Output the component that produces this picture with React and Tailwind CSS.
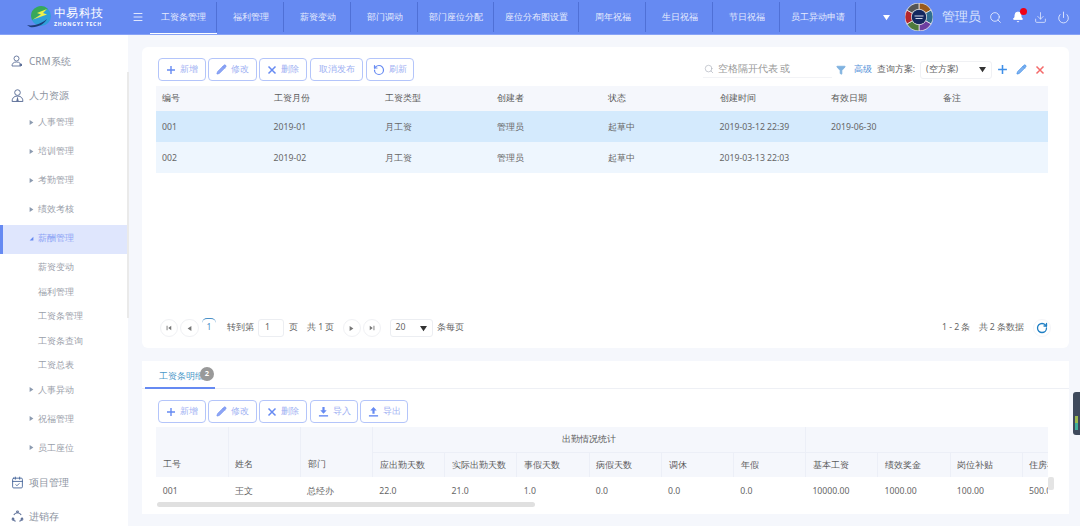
import { Menu, Search, Bell, Download, Power, Pencil, RotateCcw, RotateCw, CalendarCheck, Filter } from "lucide-react";

const tabs = [
  { label: "工资条管理", w: "w-[67px]", active: true },
  { label: "福利管理", w: "w-[67px]" },
  { label: "薪资变动", w: "w-[67px]" },
  { label: "部门调动", w: "w-[67px]" },
  { label: "部门座位分配", w: "w-[76px]" },
  { label: "座位分布图设置", w: "w-[85px]" },
  { label: "周年祝福", w: "w-[67px]" },
  { label: "生日祝福", w: "w-[67px]" },
  { label: "节日祝福", w: "w-[67px]" },
  { label: "员工异动申请", w: "w-[76px]" },
];

const rows = [
  ["001", "2019-01", "月工资", "管理员", "起草中", "2019-03-12 22:39", "2019-06-30", ""],
  ["002", "2019-02", "月工资", "管理员", "起草中", "2019-03-13 22:03", "", ""],
];

const detail = ["001", "王文", "总经办", "22.0", "21.0", "1.0", "0.0", "0.0", "0.0", "10000.00", "1000.00", "100.00", "500.00"];

function Tri({ dir = "right", className = "" }) {
  const pts = { right: "1,0 7,4 1,8", left: "7,0 1,4 7,8", down: "0,1 8,1 4,7", corner: "7,1 7,7 1,7" };
  return (
    <svg viewBox="0 0 8 8" className={className} fill="currentColor">
      <polygon points={pts[dir]} />
    </svg>
  );
}

function Edge({ last }) {
  return (
    <svg viewBox="0 0 8 8" className="w-[6px] h-[6px]" fill="currentColor">
      {last ? <path d="M1 1l4 3-4 3zM6 1h1.2v6H6z" /> : <path d="M7 1L3 4l4 3zM2 1H0.8v6H2z" />}
    </svg>
  );
}

function Logo() {
  return (
    <svg viewBox="0 0 28 24" className="w-[28px] h-[24px] shrink-0">
      <circle cx="15" cy="11" r="10" fill="#2f9fd8" />
      <path d="M5 11a10 10 0 0 1 17-7l-6 3-5 5-5 3z" fill="#38a85a" />
      <path d="M21 4l-10 4 4 1.5-8 5 14-5-4-1.5z" fill="#eef04a" />
      <path d="M1 20c6 1.5 14-1 20-6-3 5.500-10 9-17 8z" fill="#1d3c78" />
    </svg>
  );
}

function Avatar() {
  const colors = ["#9a5a1c", "#2f6d8f", "#6d3fa0", "#4f7a3c", "#b3262e", "#555555"];
  return (
    <svg viewBox="0 0 28 28" className="w-[28px] h-[28px] shrink-0 mt-[3px]">
      {colors.map((c, i) => (
        <path key={i} d="M14 14V0a14 14 0 0 1 12.1 7z" fill={c} transform={`rotate(${i * 60} 14 14)`} stroke="#eeeeee" strokeWidth="0.7" />
      ))}
      <circle cx="14" cy="14" r="8" fill="#e8e8e8" />
      <circle cx="14" cy="14" r="7.300" fill="#14275e" />
      <rect x="9.500" y="12.500" width="9" height="1" fill="#cfd6ea" />
      <rect x="10.500" y="15" width="7" height="1" fill="#cfd6ea" />
    </svg>
  );
}

function CrmIcon() {
  return (
    <svg viewBox="0 0 12 12" className="w-[12px] h-[12px]" fill="none" stroke="currentColor" strokeWidth="0.9">
      <circle cx="5.500" cy="3.500" r="2.500" />
      <path d="M1 11c0-2.500 1.500-4 4.500-4s4.500 1.500 4.500 4z" />
      <rect x="8.500" y="8.800" width="2.500" height="2.200" fill="currentColor" stroke="none" />
    </svg>
  );
}

function HrIcon() {
  return (
    <svg viewBox="0 0 12 12" className="w-[13px] h-[13px]" fill="none" stroke="currentColor" strokeWidth="0.9">
      <circle cx="6" cy="3.300" r="2.600" />
      <path d="M1 11.500c0-3 1.500-5 5-5s5 2 5 5z" />
      <path d="M6 6.800L4.800 11.500h2.400z" fill="currentColor" stroke="none" />
    </svg>
  );
}

function StockIcon() {
  return (
    <svg viewBox="0 0 14 14" className="w-[13px] h-[13px]" fill="none" stroke="currentColor" strokeWidth="1.1">
      <path d="M3 5.500a4.500 4.500 0 0 1 8 0M12 8a4.500 4.500 0 0 1-3 4.200M5 12.200A4.500 4.500 0 0 1 2 8" />
      <circle cx="7" cy="2" r="1" />
      <circle cx="2.200" cy="10" r="1" />
      <circle cx="11.800" cy="10" r="1" />
    </svg>
  );
}

function PlusIcon({ className }) {
  return (
    <svg viewBox="0 0 10 10" className={className} fill="currentColor">
      <path d="M4.300 1h1.400v3.300H9v1.400H5.700V9H4.300V5.700H1V4.300h3.300z" />
    </svg>
  );
}

function CrossIcon({ className }) {
  return (
    <svg viewBox="0 0 10 10" className={className} fill="none" stroke="currentColor" strokeWidth="1.500">
      <path d="M1.500 1.500l7 7M8.500 1.500l-7 7" />
    </svg>
  );
}

// 导入 / 导出: arrow over a solid bar
function TrayIcon({ up }) {
  return (
    <svg viewBox="0 0 12 12" className="w-[11px] h-[11px] text-[#668af2]" fill="currentColor">
      <rect x="1" y="10" width="10" height="1.500" />
      {up ? <path d="M6 1l3.500 4H7.200v3.500H4.800V5H2.500z" /> : <path d="M6 8.500L2.500 4.500h2.300V1h2.400v3.500h2.300z" />}
    </svg>
  );
}

function SideTop({ icon, label }) {
  return (
    <div className="h-[34px] flex items-center pl-[10px] gap-[5px] text-[10px] text-[#8d949f]">
      <span className="w-[14px] flex justify-center text-[#5f7199]">{icon}</span>
      {label}
    </div>
  );
}

function SideSub({ label, active, open }) {
  return (
    <div className={`h-[29px] flex items-center pb-[3px] text-[9px] ${active ? "bg-[#dfe6fd] border-l-[3px] border-[#668af2] pl-[26px] text-[#8ea5f5]" : "pl-[29px] text-[#9aa0aa]"}`}>
      <Tri dir={open ? "corner" : "right"} className={`w-[5px] h-[5px] mr-[4px] ${active ? "text-[#668af2]" : "text-[#8c9bb0]"}`} />
      {label}
    </div>
  );
}

function Btn({ icon, label, w }) {
  return (
    <button className={`${w} h-[23px] flex items-center justify-center gap-[4px] rounded-[4px] border border-[#b4c5fa] bg-white text-[8.5px] text-[#9fb2f3]`}>
      {icon}
      {label}
    </button>
  );
}

function Circle({ children, w = "w-[18px]" }) {
  return (
    <span className={`${w} h-[18px] rounded-full border border-[#f0f1f4] flex items-center justify-center text-[#777]`}>
      {children}
    </span>
  );
}

function ThGroup({ children }) {
  return (
    <th rowSpan={2} className="border-r border-[#eceff7] align-bottom font-medium text-left pl-[6.7px] pb-[6px]">
      {children}
    </th>
  );
}

const plusIcon = <PlusIcon className="w-[10px] h-[10px] text-[#668af2]" />;
const penIcon = <Pencil className="w-[11px] h-[11px] text-[#6f90f0]" fill="#8ea5f5" strokeWidth={1.5} />;
const xIcon = <CrossIcon className="w-[10px] h-[10px] text-[#668af2]" />;

export default function App() {
  return (
    <div className="w-[1080px] h-[526px] overflow-hidden flex flex-col bg-[#f5f7fc] font-['Noto_Sans','Noto_Sans_CJK_SC',sans-serif]">
      {/* Header */}
      <header className="h-[35px] shrink-0 flex bg-[#668af2] border-b border-[#88a3f6] text-[#e6ecfd]">
        <div className="w-[128px] flex items-center pl-[26px]">
          <Logo />
          <div className="leading-none">
            <div className="text-[11.5px] font-medium tracking-[0.3px] text-white">中易科技</div>
            <div className="text-[5.2px] mt-[3px] tracking-[0.75px] font-bold text-white whitespace-nowrap">ZHONGYI TECH</div>
          </div>
        </div>
        <div className="w-[22px] flex items-center pl-[3.5px]">
          <Menu className="w-[12px] h-[12px] text-white" strokeWidth={1.6} />
        </div>
        <div className="flex">
          {tabs.map((t) => (
            <div key={t.label} className={`${t.w} relative flex items-center justify-center text-[8.5px] pt-[1px]`}>
              {t.label}
              <span className="absolute right-0 top-[2px] bottom-[2px] w-px bg-[#4f70d6]" />
              {t.active && <span className="absolute left-0 right-0 bottom-0 h-px bg-white" />}
            </div>
          ))}
        </div>
        <div className="w-[49px] flex items-center justify-center pl-[11px]">
          <Tri dir="down" className="w-[7px] h-[7px] text-white" />
        </div>
        <Avatar />
        <span className="ml-[9px] text-[12.5px] flex items-center text-[#dbe4fc]">管理员</span>
        <div className="ml-[8px] flex items-center gap-[10px]">
          <Search className="w-[13px] h-[13px]" strokeWidth={1.6} />
          <span className="relative">
            <Bell className="w-[12px] h-[12px] text-white" fill="white" strokeWidth={1.6} />
            <span className="absolute -top-[3px] -right-[3px] w-[7px] h-[7px] rounded-full bg-[#f00014]" />
          </span>
          <Download className="w-[13px] h-[13px]" strokeWidth={1.4} />
          <Power className="w-[13px] h-[13px]" strokeWidth={1.6} />
        </div>
      </header>

      <div className="flex flex-1 min-h-0">
        {/* Sidebar */}
        <aside className="w-[128px] shrink-0 bg-white relative pt-[9px]">
          <SideTop icon={<CrmIcon />} label="CRM系统" />
          <SideTop icon={<HrIcon />} label="人力资源" />
          <div className="mt-[-3px]">
            <SideSub label="人事管理" />
            <SideSub label="培训管理" />
            <SideSub label="考勤管理" />
            <SideSub label="绩效考核" />
            <SideSub label="薪酬管理" active open />
          </div>
          {["薪资变动", "福利管理", "工资条管理", "工资条查询", "工资总表"].map((s) => (
            <div key={s} className="h-[24.5px] flex items-center pt-[2px] pl-[38px] text-[9.2px] text-[#9aa0aa]">{s}</div>
          ))}
          <SideSub label="人事异动" />
          <SideSub label="祝福管理" />
          <SideSub label="员工座位" />
          <div className="mt-[2px]">
            <SideTop icon={<CalendarCheck className="w-[13px] h-[13px] text-[#3f5f95]" strokeWidth={1.6} />} label="项目管理" />
            <SideTop icon={<StockIcon />} label="进销存" />
          </div>
          <span className="absolute -right-[1px] top-[37px] w-[2px] h-[246px] bg-[#eaeaea]" />
        </aside>

        {/* Main */}
        <main className="flex-1 min-w-0 pl-[14px] pr-[11px] pt-[12px]">
          {/* Top card */}
          <section className="h-[301px] bg-white rounded-[6px] flex flex-col pl-[14px] pr-[21px]">
            <div className="h-[39px] flex items-start pt-[11px] pl-[2px]">
              <div className="flex gap-[2px]">
                <Btn icon={plusIcon} label="新增" w="w-[48px]" />
                <Btn icon={penIcon} label="修改" w="w-[49px]" />
                <Btn icon={xIcon} label="删除" w="w-[48px]" />
                <Btn label="取消发布" w="w-[53px] ml-[1px]" />
                <Btn icon={<RotateCcw className="w-[12px] h-[12px] text-[#668af2]" strokeWidth={2.4} />} label="刷新" w="w-[48px] ml-[1px]" />
              </div>
              <div className="ml-auto flex items-center h-[23px] mr-[3px]">
                <div className="w-[129px] h-[16px] border-b border-[#f2f3f6] flex items-center pl-[1px] gap-[4px] text-[9.7px] text-[#999] mr-[4px]">
                  <Search className="w-[10px] h-[10px] text-[#a8adb8]" strokeWidth={1.5} />
                  空格隔开代表 或
                </div>
                <Filter className="w-[10px] h-[10px] text-[#7fb2e0] mr-[8px]" fill="#7fb2e0" />
                <span className="text-[8.5px] text-[#4f8fd8] mr-[5px]">高级</span>
                <span className="text-[8.5px] text-[#666] mr-[5px]">查询方案:</span>
                <div className="w-[72px] h-[18px] rounded-[3px] border border-[#f0f1f4] flex items-center justify-between pl-[5px] pr-[5px] text-[8.5px] text-[#666]">
                  (空方案)
                  <Tri dir="down" className="w-[7px] h-[7px] text-[#333]" />
                </div>
                <PlusIcon className="w-[11px] h-[11px] text-[#3f8fe8] ml-[5px]" />
                <Pencil className="w-[11px] h-[11px] text-[#3f8fe8] ml-[8px]" fill="#7fb2f0" strokeWidth={1.5} />
                <CrossIcon className="w-[10px] h-[10px] text-[#f46a6a] ml-[8px]" />
              </div>
            </div>

            <table className="table-fixed w-[892px] border-collapse text-[8.7px] text-[#666]">
              <thead>
                <tr className="h-[25px] bg-[#f5f7fc] text-[#5a5a5a]">
                  {["编号", "工资月份", "工资类型", "创建者", "状态", "创建时间", "有效日期", "备注"].map((h) => (
                    <th key={h} className="font-medium text-left pl-[6px] pt-[1px]">{h}</th>
                  ))}
                </tr>
              </thead>
              <tbody>
                {rows.map((r, i) => (
                  <tr key={r[0]} className={`h-[31px] ${i === 0 ? "bg-[#d4eafd]" : "bg-[#eef6fe]"}`}>
                    {r.map((c, j) => (
                      <td key={j} className="pl-[6px] pt-[2px] whitespace-nowrap">{c}</td>
                    ))}
                  </tr>
                ))}
              </tbody>
            </table>

            {/* Pager */}
            <div className="mt-auto h-[29px] flex items-start pl-[4px] -mr-[3px] text-[8.7px] text-[#666]">
              <div className="flex items-center h-[18px]">
                <Circle><Edge /></Circle>
                <span className="w-[2px]" />
                <Circle w="w-[19px]"><Tri dir="left" className="w-[5px] h-[5px]" /></Circle>
                <span className="relative w-[20px] text-center text-[#4a90c8]">
                  1
                  <span className="absolute left-[3px] -top-[3px] w-[14px] h-[5px] rounded-t-full border-t border-[#4a90c8]" />
                </span>
                <span className="ml-[8px]">转到第</span>
                <span className="ml-[4px] w-[26px] h-[18px] rounded-[3px] border border-[#eceef2] flex items-center pl-[6px]">1</span>
                <span className="ml-[5px]">页</span>
                <span className="ml-[9px]">共 1 页</span>
                <span className="w-[8px]" />
                <Circle><Tri dir="right" className="w-[5px] h-[5px]" /></Circle>
                <span className="w-[2px]" />
                <Circle><Edge last /></Circle>
                <span className="ml-[9px] w-[43px] h-[18px] rounded-[3px] border border-[#eceef2] flex items-center justify-between px-[5px]">
                  20
                  <Tri dir="down" className="w-[7px] h-[7px] text-[#333]" />
                </span>
                <span className="ml-[4px]">条每页</span>
              </div>
              <div className="ml-auto flex items-center h-[18px]">
                <span>1 - 2 条</span>
                <span className="ml-[8px]">共 2 条数据</span>
                <span className="ml-[9px] w-[18px] h-[18px] rounded-full border border-[#f4f5f8] flex items-center justify-center">
                  <RotateCw className="w-[12px] h-[12px] text-[#1f7fc4]" strokeWidth={2.6} />
                </span>
              </div>
            </div>
          </section>

          {/* Bottom card */}
          <section className="mt-[13px] h-[153px] bg-white flex flex-col">
            <div className="h-[28px] shrink-0 border-b border-[#eef0f5] pl-[3px] flex">
              <div className="relative w-[70px] h-[28px] border-b-2 border-[#668af2] flex items-center pl-[14px] pt-[6px] text-[8.7px] text-[#4a98c8]">
                工资条明细
                <span className="absolute left-[55px] top-[6px] w-[14px] h-[14px] rounded-full bg-[#999] text-white text-[7.5px] font-bold flex items-center justify-center">2</span>
              </div>
            </div>
            <div className="pl-[16px] pt-[11px] flex gap-[2px]">
              <Btn icon={plusIcon} label="新增" w="w-[48px]" />
              <Btn icon={penIcon} label="修改" w="w-[49px]" />
              <Btn icon={xIcon} label="删除" w="w-[48px]" />
              <Btn icon={<TrayIcon />} label="导入" w="w-[48px] ml-[1px]" />
              <Btn icon={<TrayIcon up />} label="导出" w="w-[48px]" />
            </div>
            <div className="relative ml-[14px] w-[892px] mt-[4px] overflow-hidden h-[80px]">
              <table className="table-fixed w-[939px] border-collapse text-[8.7px] text-[#666]">
                <thead className="bg-[#f5f7fc] text-[#5a5a5a]">
                  <tr className="h-[25px]">
                    <ThGroup>工号</ThGroup>
                    <ThGroup>姓名</ThGroup>
                    <ThGroup>部门</ThGroup>
                    <th colSpan={6} className="border-r border-b border-[#eceff7] font-medium pt-[1px]">出勤情况统计</th>
                    <th colSpan={4} className="border-b border-[#eceff7] font-medium" />
                  </tr>
                  <tr className="h-[25px]">
                    {["应出勤天数", "实际出勤天数", "事假天数", "病假天数", "调休", "年假", "基本工资", "绩效奖金", "岗位补贴", "住房补贴"].map((h) => (
                      <th key={h} className="border-r border-[#eceff7] font-medium text-left pl-[6.7px] pt-[1px] whitespace-nowrap overflow-hidden">{h}</th>
                    ))}
                  </tr>
                </thead>
                <tbody>
                  <tr className="h-[25px]">
                    {detail.map((c, i) => (
                      <td key={i} className="pl-[6.7px] pt-[5px] whitespace-nowrap overflow-hidden">{c}</td>
                    ))}
                  </tr>
                </tbody>
              </table>
              <span className="absolute left-[1px] top-[75px] w-[378px] h-[5px] rounded-full bg-[#e0e0e0]" />
            </div>
            <span className="relative">
              <span className="absolute left-[906px] -top-[30px] w-[6px] h-[13px] rounded-[2px] bg-[#e4e4e4]" />
            </span>
          </section>
        </main>
      </div>

      {/* Floating side widget */}
      <div className="fixed right-0 top-[392px] w-[7px] h-[43px] rounded-l-[3px] bg-[#3f4a5c] flex flex-col justify-end items-center pb-[5px]">
        <span className="w-[3px] h-[7px] bg-[#9dbb4f]" />
        <span className="w-[3px] h-[7px] bg-[#3fae9a]" />
      </div>
    </div>
  );
}
